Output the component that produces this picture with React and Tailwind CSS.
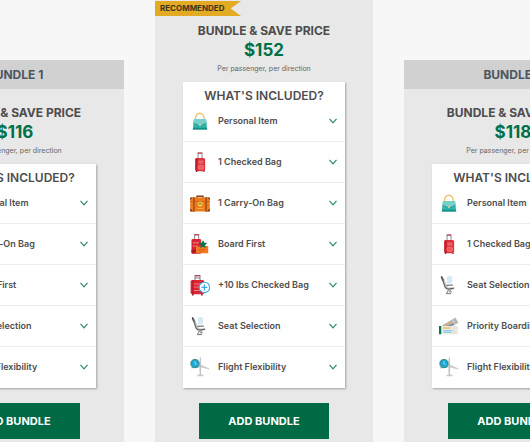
function HandbagIcon() {
  return (
    <svg viewBox="0 0 22 22" className="size-[22px]" aria-hidden="true">
      <path d="M6.5 11V8.5C6.5 1.5 15 1.5 15 8.5V11" fill="none" stroke="#f0c06a" strokeWidth="1.4" />
      <path d="M5 9h12l1.2 10.5H3.8z" fill="#2fb5ab" />
      <path d="M5 9h12l.6 4.2-5 2h-3l-5.2-2z" fill="#74d0c9" />
      <path d="M4.4 13.2l5.2 2.2h3l5-2.2" fill="none" stroke="#1c988f" strokeWidth=".8" />
      <path d="M4 17.8h14l.2 1.8H3.8z" fill="#138f86" />
      <circle cx="11" cy="15" r="1" fill="#f2cf82" />
    </svg>
  )
}

function SuitcaseIcon() {
  return (
    <svg viewBox="0 0 22 22" className="size-[22px]" aria-hidden="true">
      <path d="M9 8V2.2h4V8" fill="none" stroke="#8a8a8e" strokeWidth="1" />
      <path d="M8.6 2h4.8" stroke="#c3434b" strokeWidth="1.2" />
      <rect x="6.3" y="7" width="9.8" height="13.2" rx="1.6" fill="#e0303b" />
      <path d="M6.3 8.6c0-.9.7-1.6 1.6-1.6h.8v13.2h-.8c-.9 0-1.6-.7-1.6-1.6z" fill="#c42130" />
      <path d="M9.4 10.2h5M9.4 12h5" stroke="#f59a9c" strokeWidth=".8" />
      <rect x="9.2" y="14.4" width="5.2" height="3.8" rx=".6" fill="#ef5a5a" stroke="#f8a08f" strokeWidth=".5" />
      <path d="M7.5 20v1M15 20v1" stroke="#4b3035" strokeWidth="1.2" />
    </svg>
  )
}

function CarryOnIcon() {
  return (
    <svg viewBox="0 0 22 22" className="size-[22px]" aria-hidden="true">
      <path d="M8 6V4.2h6V6" fill="none" stroke="#86401c" strokeWidth="1.4" />
      <rect x="1.2" y="5.4" width="19.6" height="14" rx="1.2" fill="#ee7c1c" />
      <path d="M1.2 9.5h19.6" stroke="#c95e12" strokeWidth=".8" />
      <path d="M5 5v14.8M17 5v14.8" stroke="#a04a1c" strokeWidth="1.4" />
      <path d="M1.2 8V6.4c0-.6.4-1 1-1h1.6zM20.8 8V6.4c0-.6-.4-1-1-1h-1.6zM1.2 16.6v1.8c0 .6.4 1 1 1H4zM20.8 16.6v1.8c0 .6-.4 1-1 1H18z" fill="#79351a" />
      <circle cx="11.2" cy="12" r="2.5" fill="#f6cb4b" />
      <path d="M9.7 12.6l1.4-1.8 1.6 2.1" fill="none" stroke="#57715b" strokeWidth=".9" />
      <path d="M8 16.5h6" stroke="#ffb35e" strokeWidth=".8" />
    </svg>
  )
}

function BoardFirstIcon() {
  return (
    <svg viewBox="0 0 22 22" className="size-[22px]" aria-hidden="true">
      <path d="M5.7 7V1.8h4V7" fill="none" stroke="#808086" strokeWidth="1" />
      <path d="M5.2 1.6h5" stroke="#b54850" strokeWidth="1.2" />
      <rect x="2.5" y="6" width="9.6" height="14.6" rx="1.2" fill="#d92533" />
      <path d="M4 9.8h6M4 13h5" stroke="#f8a5a2" strokeWidth=".8" />
      <path d="M2.5 16.4h9.6v3c0 .7-.5 1.2-1.2 1.2H3.7c-.7 0-1.2-.5-1.2-1.2z" fill="#b21724" />
      <path d="M7 13.8l12.2-.8v7.2H7z" fill="#f17a22" />
      <path d="M9.5 16.6h7M9.5 18h5" stroke="#d95a1c" strokeWidth=".8" />
      <path d="M14 7l1.3 2.7 3 .4-2.2 2 .6 3-2.7-1.4-2.6 1.4.5-3-2.2-2 3-.4z" fill="#08704a" />
    </svg>
  )
}

function ExtraWeightIcon() {
  return (
    <svg viewBox="0 0 22 22" className="size-[22px]" aria-hidden="true">
      <path d="M6 6.5V1.8h5v4.7M6 4h5" fill="none" stroke="#808086" strokeWidth="1" />
      <path d="M5.6 1.6h5.8" stroke="#b54850" strokeWidth="1.2" />
      <rect x="1.6" y="6" width="13.6" height="14.2" rx="1.6" fill="#da2634" />
      <path d="M4 6v14.2" stroke="#a81221" strokeWidth="1" />
      <path d="M4.5 10h7.5M4.5 13h6M4.5 16.5h7" stroke="#f39193" strokeWidth=".8" />
      <path d="M3.8 20v1.4M12.8 20v1.4" stroke="#8c2630" strokeWidth="1.6" />
      <circle cx="15.4" cy="13.4" r="5.2" fill="#fff" stroke="#38abe0" strokeWidth="1.1" />
      <path d="M15.4 10.4v6M12.4 13.4h6" stroke="#38abe0" strokeWidth="1.3" />
    </svg>
  )
}

function SeatIcon() {
  return (
    <svg viewBox="0 0 22 22" className="size-[22px]" aria-hidden="true">
      <rect x="8.8" y="2" width="5.4" height="7.6" rx="2.2" fill="#d5eaf5" />
      <path d="M5.2 4.6l3 7.6c.5 1 1 1.6 2 1.8l4.6.6" fill="none" stroke="#c4c6c8" strokeWidth="1.6" strokeLinecap="round" />
      <path d="M3.6 3l1.2 2.8" fill="none" stroke="#4a4d52" strokeWidth="1.8" strokeLinecap="round" />
      <path d="M4.2 4.6l2.8 8.2c.4 1.2 1.2 1.8 2.2 2l2 .4 4.6-1" fill="none" stroke="#5c5f64" strokeWidth="1.2" strokeLinecap="round" />
      <path d="M8.6 11.4l6.4-.4" fill="none" stroke="#6b6e72" strokeWidth="1.1" />
      <path d="M10.8 15.4l-2 3.6M13 15.4l-1.8 2.4h2.6M8 19.6h5" fill="none" stroke="#77797d" strokeWidth="1" />
    </svg>
  )
}

function FlightIcon() {
  return (
    <svg viewBox="0 0 22 22" className="size-[22px]" aria-hidden="true">
      <path d="M10.8 1.6c.3-.8.8-.8 1 0l.4 7.2 7.8 3.4.3 1.2-8.1-1.8-.3 6.4 2.8 1.2v1H8.2v-1l2.5-1.2-.3-6.4-8.4 1v-1.4l8.4-2.4z" fill="#cbcccd" />
      <path d="M11.3 2v18" stroke="#b9bbbd" strokeWidth=".6" />
      <circle cx="6" cy="7.6" r="4.1" fill="#1ba7d8" stroke="#2c8a80" strokeWidth="1" />
      <path d="M6 5.2v2.6l1.6.8" fill="none" stroke="#a5e3f5" strokeWidth=".9" />
    </svg>
  )
}

function BoardingPassIcon() {
  return (
    <svg viewBox="0 0 22 22" className="size-[22px]" aria-hidden="true">
      <path d="M4 10.4L17.4 2.6l3 5.2L8 15z" fill="#b5b6b8" />
      <path d="M14.4 4.6l2.6 5.2" stroke="#e4e4e4" strokeWidth=".8" />
      <path d="M7.4 10.2l6-3" stroke="#e9a84f" strokeWidth="1.2" />
      <path d="M9.6 11.4l6.4-2.6" stroke="#5c7eb0" strokeWidth="1.1" />
      <rect x="1" y="11" width="19" height="8.2" rx=".6" fill="#ebe9e2" />
      <path d="M1 11h2.2v8.2H1z" fill="#0a7650" />
      <path d="M5 13h7.5" stroke="#f3b75d" strokeWidth="1.3" />
      <path d="M5.4 15.6h9M5.4 17.4h8" stroke="#8fd0ea" strokeWidth="1.3" />
      <path d="M16 11v8.2" stroke="#d6d4ce" strokeWidth=".7" />
    </svg>
  )
}

const features = {
  personal: { label: 'Personal Item', Icon: HandbagIcon },
  checked: { label: '1 Checked Bag', Icon: SuitcaseIcon },
  carryOn: { label: '1 Carry-On Bag', Icon: CarryOnIcon },
  boardFirst: { label: 'Board First', Icon: BoardFirstIcon },
  extraWeight: { label: '+10 lbs Checked Bag', Icon: ExtraWeightIcon },
  seat: { label: 'Seat Selection', Icon: SeatIcon },
  priority: { label: 'Priority Boarding', Icon: BoardingPassIcon },
  flexibility: { label: 'Flight Flexibility', Icon: FlightIcon },
}

const bundles = [
  {
    name: 'BUNDLE 1',
    price: '$116',
    items: ['personal', 'carryOn', 'boardFirst', 'seat', 'flexibility'],
  },
  {
    name: 'BUNDLE 2',
    price: '$152',
    recommended: true,
    items: ['personal', 'checked', 'carryOn', 'boardFirst', 'extraWeight', 'seat', 'flexibility'],
  },
  {
    name: 'BUNDLE 3',
    price: '$118',
    items: ['personal', 'checked', 'seat', 'priority', 'flexibility'],
  },
]

function FeatureRow({ label, Icon }) {
  return (
    <li className="border-b border-[#ececec] last:border-b-0">
      <button type="button" className="flex h-10 w-full items-center gap-[7px] pr-2 pl-1.5 text-left">
        <Icon />
        <span className="flex-1 text-[9px] font-semibold whitespace-nowrap text-[#4d4d4d]">{label}</span>
        <svg viewBox="0 0 8 6" className="h-1.5 w-2" aria-hidden="true">
          <path d="M.5 .8L4 4.8 7.5 .8" fill="none" stroke="#2c8a66" strokeWidth="1.2" />
        </svg>
      </button>
    </li>
  )
}

function BundleCard({ name, price, recommended, items }) {
  return (
    <article className="w-[218px] shrink-0 bg-[#e8e8e8] pb-[3px] text-center">
      {recommended ? (
        <div className="pt-px pb-[7px]">
          <p className="w-[86px] bg-[#e3ab23] pl-[5px] text-left text-[8px] leading-[15px] font-bold text-[#3b3420] [clip-path:polygon(0_0,100%_0,88%_50%,100%_100%,0_100%)]">
            RECOMMENDED
          </p>
        </div>
      ) : (
        <h2 className="mb-4 bg-[#d1d1d1] text-[12px] leading-[29px] font-bold text-[#4b5660]">{name}</h2>
      )}

      <p className="text-[12px] leading-4 font-bold text-[#4d4d4d]">BUNDLE &amp; SAVE PRICE</p>
      <p className="text-[17px] leading-[22px] font-bold text-[#007048]">{price}</p>
      <p className="text-[7px] leading-4 text-[#666]">Per passenger, per direction</p>

      <section className="mx-7 mt-[5px] bg-white pt-2 pb-px shadow-[1px_1px_2px_rgba(0,0,0,0.3)]">
        <h3 className="text-[12px] leading-[11px] font-semibold text-[#4d4d4d]">WHAT'S INCLUDED?</h3>
        <ul>
          {items.map((key) => (
            <FeatureRow key={key} {...features[key]} />
          ))}
        </ul>
      </section>

      <button type="button" className="mt-[15px] h-9 w-[130px] bg-[#006a44] text-[11px] font-bold text-white">
        ADD BUNDLE
      </button>
    </article>
  )
}

export default function App() {
  return (
    <main className="flex min-h-screen items-end justify-center gap-[31px] overflow-hidden bg-[#f7f7f7] pr-0.5 font-['Inter',sans-serif]">
      {bundles.map((bundle) => (
        <BundleCard key={bundle.name} {...bundle} />
      ))}
    </main>
  )
}
